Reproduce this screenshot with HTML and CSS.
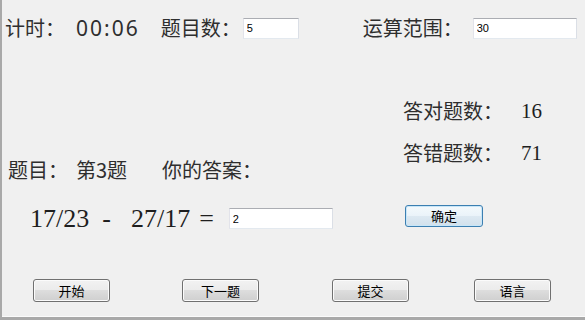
FILE: index.html
```html
<!DOCTYPE html>
<html lang="zh-CN">
<head>
<meta charset="utf-8">
<title>四则运算</title>
<link rel="stylesheet" href="styles.css">
</head>
<body>
<div class="window">
  <div class="top-row">
    <span class="label">计时：</span>
    <span class="timer">00:06</span>
    <span class="label lbl-count">题目数：</span>
    <input class="field field-count" type="text" value="5">
    <span class="label lbl-range">运算范围：</span>
    <input class="field field-range" type="text" value="30">
  </div>
  <div class="middle">
    <div class="left-col">
      <div class="question-row">
        <span class="label">题目：</span>
        <span class="label q-no">第3题</span>
        <span class="label q-answer">你的答案：</span>
      </div>
      <div class="equation-row">
        <span class="term">17/23</span>
        <span class="op-minus">-</span>
        <span class="term term-2">27/17</span>
        <span class="op-eq">=</span>
        <input class="field field-answer" type="text" value="2">
      </div>
    </div>
    <div class="right-col">
      <div class="stat"><span class="label">答对题数：</span><span class="num">16</span></div>
      <div class="stat stat-wrong"><span class="label">答错题数：</span><span class="num">71</span></div>
      <button class="btn btn-confirm">确定</button>
    </div>
  </div>
  <div class="bottom-row">
    <button class="btn btn-start">开始</button>
    <button class="btn btn-next">下一题</button>
    <button class="btn btn-submit">提交</button>
    <button class="btn btn-lang">语言</button>
  </div>
</div>
</body>
</html>
```
FILE: styles.css
```css
* { box-sizing: border-box; }

html, body {
  margin: 0;
  background: #f0f0f0;
}

body {
  font-family: "Noto Sans CJK SC", "Noto Sans", sans-serif;
  color: #2e2e2e;
}

.window {
  display: flow-root;
  width: 585px;
  height: 320px;
  overflow: hidden;
  border-left: 2px solid #a9a9a9;
  border-bottom: 3px solid #a9a9a9;
  box-shadow: inset 0 -1px 0 #fbfbfb;
}

.label {
  font-size: 20px;
  line-height: 22px;
  white-space: nowrap;
}

/* top row */
.top-row {
  display: flex;
  align-items: center;
  height: 22px;
  margin-top: 17px;
  padding-left: 3px;
}

.timer {
  margin-left: 11px;
  font-family: "Noto Sans", sans-serif;
  font-size: 21px;
  line-height: 22px;
  letter-spacing: 2px;
}

.lbl-count { margin-left: 21px; }
.lbl-range { margin-left: 64px; }

.field {
  height: 21px;
  padding: 0 3px;
  border: 1px solid #abadb3;
  border-color: #abadb3 #dbdfe6 #e3e9ef #e2e3ea;
  background: #fff;
  font-family: "Liberation Sans", sans-serif;
  font-size: 11px;
  color: #000;
  outline: none;
}

.field-count { width: 56px; margin-left: 2px; }
.field-range { width: 104px; margin-left: 10px; }

/* middle */
.middle {
  display: grid;
  grid-template-columns: 401px 1fr;
}

.left-col {
  display: flex;
  flex-direction: column;
}

.question-row {
  display: flex;
  align-items: center;
  height: 22px;
  margin-top: 120px;
  padding-left: 6px;
}

.q-no { margin-left: 8px; }
.q-answer { margin-left: 35px; }

.equation-row {
  display: flex;
  align-items: center;
  height: 23px;
  margin-top: 26px;
  padding-left: 28px;
  font-family: "Liberation Serif", serif;
  font-size: 26px;
  line-height: 23px;
  color: #1e1e1e;
}

.op-minus { margin-left: 13px; }
.term-2 { margin-left: 20px; }
.op-eq { margin-left: 9px; }

.field-answer {
  width: 104px;
  margin-left: 15px;
}

.right-col {
  display: flex;
  flex-direction: column;
  align-items: flex-start;
}

.stat {
  display: flex;
  align-items: center;
  height: 22px;
  margin-top: 61px;
}

.stat-wrong { margin-top: 20px; }

.num {
  margin-left: 18px;
  font-family: "Liberation Serif", serif;
  font-size: 21px;
  line-height: 22px;
  color: #1e1e1e;
}

/* buttons */
.btn {
  width: 77px;
  height: 23px;
  padding: 0;
  border: 1px solid #707070;
  border-radius: 3px;
  background: linear-gradient(#f2f2f2 0%, #ebebeb 50%, #dddddd 50%, #cfcfcf 100%);
  box-shadow: inset 0 0 0 1px #fbfbfb;
  font-family: "Noto Sans CJK SC", sans-serif;
  font-size: 13px;
  line-height: 20px;
  color: #000;
}

.btn-confirm {
  width: 78px;
  height: 22px;
  margin-top: 41px;
  margin-left: 2px;
  border-color: #3c7fb1;
  background: linear-gradient(#f4f9fc 0%, #eaf3f9 50%, #dde9f2 50%, #d2e1ec 100%);
  box-shadow: inset 0 0 0 1px #c8e6f8;
}

.bottom-row {
  display: flex;
  margin-top: 49px;
  padding-left: 31px;
}

.btn-next { margin-left: 72px; }
.btn-submit { margin-left: 73px; }
.btn-lang { margin-left: 65px; }
```
